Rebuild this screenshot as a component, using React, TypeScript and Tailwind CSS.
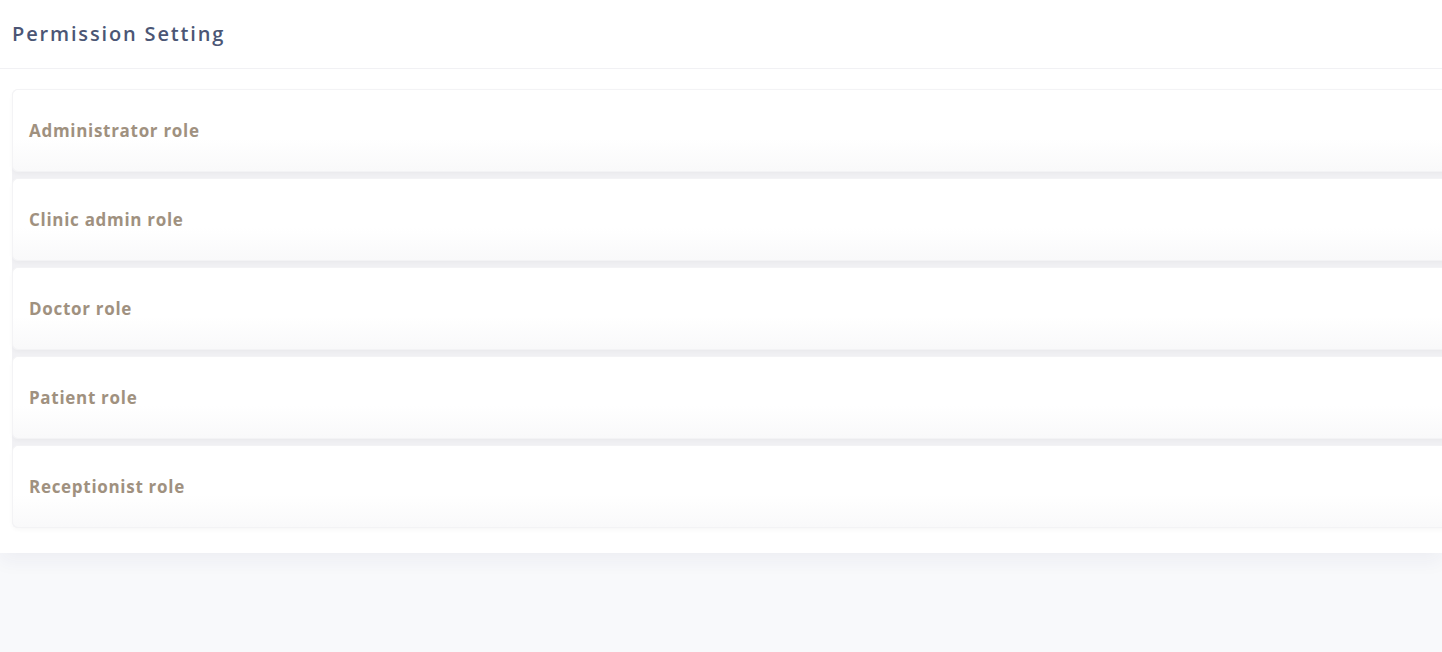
import React from "react";

const roles = [
  "Administrator role",
  "Clinic admin role",
  "Doctor role",
  "Patient role",
  "Receptionist role",
];

export default function App() {
  return (
    <div
      className="min-h-[652px] w-full overflow-hidden bg-[#f8f9fb]"
      style={{ fontFamily: '"Open Sans", "Noto Sans", sans-serif' }}
    >
      <div className="w-full bg-white shadow-[0_8px_18px_rgba(30,40,90,0.05)]">
        <div className="flex h-[69px] items-center border-b border-[#f1f1f4] px-3">
          <h1 className="text-[20px] font-semibold tracking-[1.85px] text-[#4b5675]">
            Permission Setting
          </h1>
        </div>
        <div className="pb-[25px] pl-3 pt-5">
          <div className="flex w-[1460px] flex-col gap-[6px] rounded-l-[6px] bg-[#f1f1f4]">
            {roles.map((r) => (
              <div
                key={r}
                className="flex h-[83px] items-center rounded-l-[6px] border border-r-0 border-[#f3f3f5] bg-gradient-to-b from-white from-60% to-[#f9f9fa] pl-4 shadow-[0_2px_4px_rgba(0,0,0,0.03)]"
              >
                <span className="text-[17px] font-bold tracking-[0.7px] text-[#a0917f]">
                  {r}
                </span>
              </div>
            ))}
          </div>
        </div>
      </div>
    </div>
  );
}
